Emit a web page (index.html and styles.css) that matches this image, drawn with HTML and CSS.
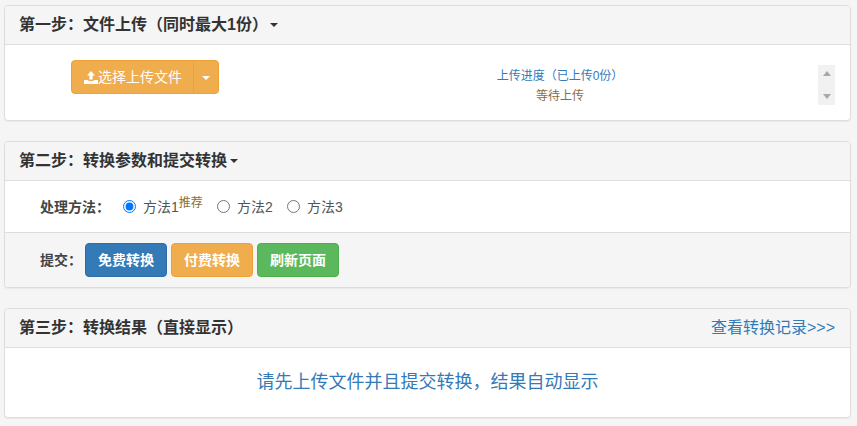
FILE: index.html
```html
<!DOCTYPE html>
<html lang="zh-CN">
<head>
<meta charset="utf-8">
<title>文件转换</title>
<link rel="stylesheet" href="styles.css">
</head>
<body>
<section class="panel first">
  <div class="panel-heading"><h3 class="title">第一步：文件上传（同时最大1份）<span class="caret gap"></span></h3></div>
  <div class="upload-body">
    <div class="btn-group">
      <button class="btn warning main" type="button"><svg class="upload-icon" viewBox="0 0 14 13" aria-hidden="true"><path d="M7 0 11 4.4H8.6V8.6H5.4V4.4H3ZM0 9H4.3V10H9.7V9H14V13H0Z"/></svg>选择上传文件</button>
      <button class="btn warning split" type="button" aria-label="更多"><span class="caret white"></span></button>
    </div>
    <div class="progress-info">
      <div class="blue">上传进度（已上传0份）</div>
      <div class="brown">等待上传</div>
    </div>
    <div class="scrollbar" aria-hidden="true"><span class="arrow up"></span><span class="arrow down"></span></div>
  </div>
</section>

<section class="panel">
  <div class="panel-heading"><h3 class="title">第二步：转换参数和提交转换<span class="caret near"></span></h3></div>
  <div class="form-row">
    <span class="label">处理方法：</span>
    <label class="radio r1"><input type="radio" name="m" checked>方法1<sup class="brown">推荐</sup></label>
    <label class="radio r2"><input type="radio" name="m">方法2</label>
    <label class="radio r3"><input type="radio" name="m">方法3</label>
  </div>
  <div class="panel-footer">
    <span class="label submit">提交：</span>
    <button class="btn primary small" type="button">免费转换</button>
    <button class="btn warning small" type="button">付费转换</button>
    <button class="btn success small" type="button">刷新页面</button>
  </div>
</section>

<section class="panel">
  <div class="panel-heading between"><h3 class="title">第三步：转换结果（直接显示）</h3><a class="record" href="#">查看转换记录&gt;&gt;&gt;</a></div>
  <div class="result-body">请先上传文件并且提交转换，结果自动显示</div>
</section>
</body>
</html>
```
FILE: styles.css
```css
* { box-sizing: border-box; }
html, body { margin: 0; }
body {
  background: #f5f5f5;
  padding: 5px 6px 0 4px;
  font-family: "Liberation Sans", "Noto Sans CJK SC", sans-serif;
  font-size: 14px;
  line-height: 20px;
  color: #333;
}
.panel {
  margin-bottom: 20px;
  background: #fff;
  border: 1px solid #ddd;
  border-radius: 4px;
  box-shadow: 0 1px 1px rgba(0, 0, 0, .05);
  overflow: hidden;
}
.panel-heading {
  display: flex;
  align-items: center;
  height: 39px;
  padding: 0 15px 1px 14px;
  background: #f5f5f5;
  border-bottom: 1px solid #ddd;
}
.between { justify-content: space-between; }
.title { margin: 0; font-size: 16px; line-height: 18px; font-weight: 700; color: #333; }
.caret {
  display: inline-block;
  width: 0;
  height: 0;
  vertical-align: middle;
  border-top: 4px solid #333;
  border-left: 4px solid transparent;
  border-right: 4px solid transparent;
}
.gap { margin-left: 2px; }
.near { margin-left: 3px; }
.white { border-top-color: #fff; }
.upload-body {
  display: flex;
  align-items: flex-start;
  height: 75px;
  padding: 15px 15px 0 66px;
}
.btn-group { display: flex; }
.btn {
  height: 34px;
  padding: 0;
  font: inherit;
  color: #fff;
  border: 1px solid;
  border-radius: 4px;
  cursor: pointer;
}
.warning { background: #f0ad4e; border-color: #eea236; }
.primary { background: #337ab7; border-color: #2e6da4; }
.success { background: #5cb85c; border-color: #4cae4c; }
.main {
  display: flex;
  align-items: center;
  width: 123px;
  padding-left: 12px;
  border-radius: 4px 0 0 4px;
}
.upload-icon { width: 14px; height: 13px; fill: #fff; flex: none; }
.split { width: 26px; margin-left: -1px; border-radius: 0 4px 4px 0; }
.progress-info {
  width: 240px;
  margin: 6px 0 0 221px;
  font-size: 12px;
  line-height: 20px;
  text-align: center;
}
.blue { color: #337ab7; }
.brown { color: #8a6d3b; }
.scrollbar {
  display: flex;
  flex-direction: column;
  justify-content: space-between;
  align-items: center;
  width: 17px;
  height: 40px;
  margin: 5px 0 0 auto;
  padding: 6px 0;
  background: #f1f1f1;
}
.arrow { width: 0; height: 0; border-left: 4px solid transparent; border-right: 4px solid transparent; }
.up { border-bottom: 5px solid #a8a8a8; }
.down { border-top: 5px solid #a8a8a8; }
.form-row {
  display: flex;
  align-items: center;
  height: 51px;
  padding-left: 35px;
}
.label { font-weight: 700; color: #444; width: 83px; flex: none; white-space: nowrap; }
.radio { display: flex; align-items: center; color: #555; }
.radio input { width: 13px; height: 13px; margin: 0 7px 0 0; }
.radio sup { align-self: flex-start; font-size: 12px; line-height: 12px; }
.r1 { width: 94px; }
.r2 { width: 70px; }
.panel-footer {
  display: flex;
  align-items: center;
  gap: 4px;
  height: 55px;
  padding-left: 35px;
  background: #f5f5f5;
  border-top: 1px solid #ddd;
}
.submit { width: 41px; }
.small { width: 82px; font-weight: 700; }
.record { color: #337ab7; font-size: 16px; text-decoration: none; }
.result-body {
  display: flex;
  align-items: center;
  justify-content: center;
  height: 69px;
  padding-bottom: 2px;
  font-size: 18px;
  color: #337ab7;
}
```
